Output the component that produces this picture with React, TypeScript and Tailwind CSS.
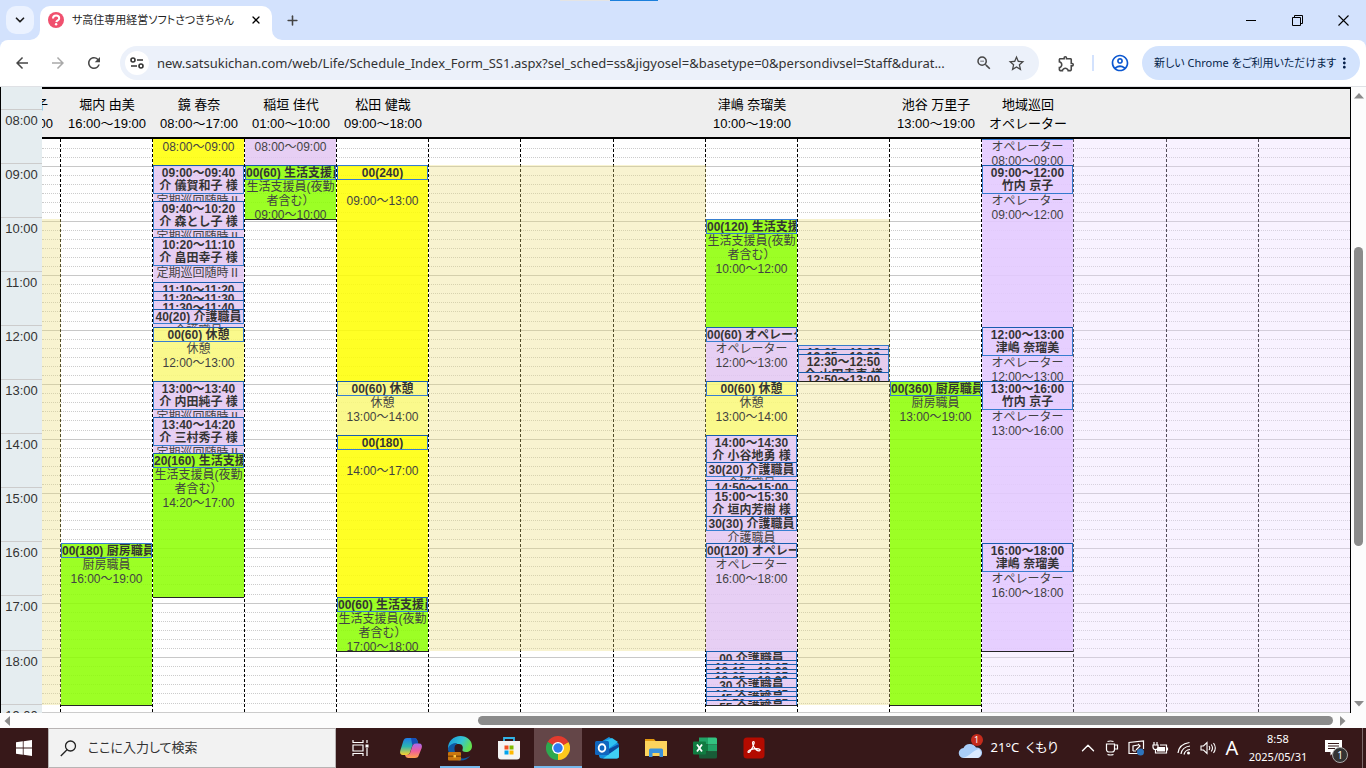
import React from "react";
import {
  MdArrowBack,
  MdArrowForward,
  MdRefresh,
  MdStarBorder,
  MdZoomOut,
  MdOutlineExtension,
  MdMoreVert,
  MdOutlineAccountCircle,
} from "react-icons/md";
import { ChevronDown, ChevronUp, Plus, X } from "lucide-react";

type Tone = "purple" | "violet" | "green" | "yellow" | "cream";

type Shift = {
  from: string;
  to: string;
  tone: Tone;
  title: string;
  person?: string;
  body?: string[];
};

type Shade = { kind: "beige" | "lavender"; from?: string; to?: string };

type Column = { name?: string; hours?: string; shade?: Shade; shifts?: Shift[] };

const TONES: Record<Tone, string> = {
  purple: "bg-[#e3c7f3]",
  violet: "bg-[#e3c9ff]",
  green: "bg-[#8bff00]",
  yellow: "bg-[#ffff00]",
  cream: "bg-[#faf978]",
};

const LIFE = ["生活支援員(夜勤", "者含む）"];
const ROUND = ["定期巡回随時Ⅱ"];

const span = (from: string, to: string) => `${from}〜${to}`;

const visit = (from: string, to: string, person?: string): Shift => ({
  from,
  to,
  tone: "purple",
  title: span(from, to),
  person,
  body: person ? ROUND : [],
});

const duty = (from: string, to: string, tone: Tone, title: string, body: string[]): Shift => ({
  from,
  to,
  tone,
  title,
  body: body.length ? [...body, span(from, to)] : [],
});

const care = (from: string, to: string, title: string): Shift => ({
  from,
  to,
  tone: "purple",
  title,
  body: ["介護職員"],
});

const operator = (from: string, to: string, person: string): Shift => ({
  from,
  to,
  tone: "violet",
  title: span(from, to),
  person,
  body: ["オペレーター", span(from, to)],
});

const BEIGE_DAY: Shade = { kind: "beige", from: "09:00", to: "18:00" };
const BEIGE_LATE: Shade = { kind: "beige", from: "10:00", to: "19:00" };
const LAVENDER: Shade = { kind: "lavender" };

const COLUMNS: Column[] = [
  {
    name: "堀内 由美",
    hours: "16:00〜19:00",
    shifts: [duty("16:00", "19:00", "green", "00(180) 厨房職員", ["厨房職員"])],
  },
  {
    name: "鏡 春奈",
    hours: "08:00〜17:00",
    shifts: [
      duty("08:00", "09:00", "yellow", "00(60)", [""]),
      visit("09:00", "09:40", "介 儀賀和子 様"),
      visit("09:40", "10:20", "介 森とし子 様"),
      visit("10:20", "11:10", "介 畠田幸子 様"),
      visit("11:10", "11:20"),
      visit("11:20", "11:30"),
      visit("11:30", "11:40"),
      care("11:40", "12:00", "40(20) 介護職員"),
      duty("12:00", "13:00", "cream", "00(60) 休憩", ["休憩"]),
      visit("13:00", "13:40", "介 内田純子 様"),
      visit("13:40", "14:20", "介 三村秀子 様"),
      duty("14:20", "17:00", "green", "20(160) 生活支援員", LIFE),
    ],
  },
  {
    name: "稲垣 佳代",
    hours: "01:00〜10:00",
    shifts: [
      duty("08:00", "09:00", "purple", "00(60)", [""]),
      duty("09:00", "10:00", "green", "00(60) 生活支援員", LIFE),
    ],
  },
  {
    name: "松田 健哉",
    hours: "09:00〜18:00",
    shifts: [
      duty("09:00", "13:00", "yellow", "00(240)", [""]),
      duty("13:00", "14:00", "cream", "00(60) 休憩", ["休憩"]),
      duty("14:00", "17:00", "yellow", "00(180)", [""]),
      duty("17:00", "18:00", "green", "00(60) 生活支援員", LIFE),
    ],
  },
  { shade: BEIGE_DAY },
  { shade: BEIGE_DAY },
  { shade: BEIGE_DAY },
  {
    name: "津嶋 奈瑠美",
    hours: "10:00〜19:00",
    shifts: [
      duty("10:00", "12:00", "green", "00(120) 生活支援員", LIFE),
      duty("12:00", "13:00", "purple", "00(60) オペレーター", ["オペレーター"]),
      duty("13:00", "14:00", "cream", "00(60) 休憩", ["休憩"]),
      visit("14:00", "14:30", "介 小谷地勇 様"),
      care("14:30", "14:50", "30(20) 介護職員"),
      visit("14:50", "15:00"),
      visit("15:00", "15:30", "介 垣内芳樹 様"),
      care("15:30", "16:00", "30(30) 介護職員"),
      duty("16:00", "18:00", "purple", "00(120) オペレーター", ["オペレーター"]),
      duty("18:00", "18:10", "purple", "00 介護職員", []),
      visit("18:10", "18:15"),
      visit("18:15", "18:20"),
      visit("18:20", "18:25"),
      visit("18:25", "18:30"),
      duty("18:30", "18:40", "purple", "30 介護職員", []),
      visit("18:40", "18:45"),
      duty("18:45", "18:50", "purple", "45 介護職員", []),
      visit("18:50", "18:55"),
      duty("18:55", "19:00", "purple", "55 介護職員", []),
    ],
  },
  {
    shade: BEIGE_LATE,
    shifts: [
      visit("12:20", "12:25"),
      visit("12:25", "12:30"),
      visit("12:30", "12:50", "介 山田幸恵 様"),
      visit("12:50", "13:00"),
    ],
  },
  {
    name: "池谷 万里子",
    hours: "13:00〜19:00",
    shifts: [duty("13:00", "19:00", "green", "00(360) 厨房職員", ["厨房職員"])],
  },
  {
    name: "地域巡回",
    hours: "オペレーター",
    shade: LAVENDER,
    shifts: [
      operator("08:00", "09:00", "竹内 京子"),
      operator("09:00", "12:00", "竹内 京子"),
      operator("12:00", "13:00", "津嶋 奈瑠美"),
      operator("13:00", "16:00", "竹内 京子"),
      operator("16:00", "18:00", "津嶋 奈瑠美"),
    ],
  },
  { shade: LAVENDER },
  { shade: LAVENDER },
  { shade: LAVENDER },
];

const GRID =
  "grid grid-cols-[19px_92fr_92fr_92fr_92fr_92fr_93fr_92fr_92fr_92fr_92fr_92fr_93fr_92fr_91fr]";

/* 9:00 sits 26px below the header; one hour is 54px tall. */
const yOf = (time: string) => {
  const [h, m] = time.split(":").map(Number);
  return 26 + Math.floor(((h - 9) * 60 + m) * 0.9);
};

const HOURS = ["08", "09", "10", "11", "12", "13", "14", "15", "16", "17", "18", "19"];
const LONG_HOURS = [true, false, true, false, true, false, true, true, false, true];
const SLOTS: { tall: boolean; hour: boolean }[] = [
  { tall: true, hour: false },
  { tall: false, hour: false },
  { tall: false, hour: true },
  ...LONG_HOURS.flatMap((long) =>
    [0, 1, 2, 3, 4, 5].map((i) => ({ tall: long && i === 4, hour: i === 5 })),
  ),
];

function ShiftBlock({ shift, offset }: { shift: Shift; offset: number }) {
  const height = yOf(shift.to) - yOf(shift.from) + 1;
  return (
    <article
      className={`-mb-px shrink-0 overflow-hidden border-b border-black text-center text-[12px] opacity-85 ${TONES[shift.tone]}`}
      style={{ height, marginTop: offset }}
    >
      <h3
        className={`overflow-hidden border border-[#1668c8] pt-px leading-[13px] font-bold whitespace-nowrap text-[#111] ${shift.person ? "h-[29px]" : "h-[15px]"}`}
      >
        <span className="block">{shift.title}</span>
        {shift.person && <span className="block">{shift.person}</span>}
      </h3>
      {shift.body?.map((line, i) => (
        <p
          key={i}
          className={`whitespace-nowrap text-[#222] ${line.includes(":") ? "h-[13px] leading-[15px]" : "h-[14px] leading-[14px]"}`}
        >
          {line}
        </p>
      ))}
    </article>
  );
}

function ShadeCell({ shade }: { shade?: Shade }) {
  if (!shade) return <div />;
  if (shade.kind === "lavender") return <div className="bg-[#ebdaff]/35" />;
  const top = yOf(shade.from!);
  return (
    <div>
      <div className="bg-[#ebdd79]/35" style={{ marginTop: top, height: yOf(shade.to!) - top }} />
    </div>
  );
}

function ShiftColumn({ shifts = [] }: { shifts?: Shift[] }) {
  return (
    <div className="flex min-w-0 flex-col pr-px">
      {shifts.map((s, i) => (
        <ShiftBlock
          key={s.from}
          shift={s}
          offset={yOf(s.from) - (i === 0 ? 0 : yOf(shifts[i - 1].to))}
        />
      ))}
    </div>
  );
}

function Schedule() {
  return (
    <div className="flex min-h-0 min-w-0 flex-1 overflow-hidden border-x border-black bg-white">
      <div className="w-[41px] shrink-0 overflow-hidden bg-[#e5edf0] text-center text-[13px] text-[#333]">
        <div className="h-[23px] border-b border-[#ccc]" />
        {HOURS.map((h) => (
          <div
            key={h}
            className={`border-b border-[#ccc] leading-[22px] ${h === "17" ? "h-[55px]" : "h-[54px]"}`}
          >
            {h}:00
          </div>
        ))}
      </div>
      <div className="flex min-w-0 flex-1 flex-col">
        <div
          className={`${GRID} h-[52px] shrink-0 border-y-2 border-black bg-[#eee] pt-1.5 text-center text-[13px] leading-[19px] whitespace-nowrap text-black`}
        >
          <div className="overflow-hidden text-right">
            <p className="pr-[13px]">
              <span className="float-right">子</span>
            </p>
            <p className="clear-both pr-2">
              <span className="float-right">00</span>
            </p>
          </div>
          {COLUMNS.map((c, i) => (
            <div key={i}>
              <p>{c.name}</p>
              <p>{c.hours}</p>
            </div>
          ))}
        </div>
        <div className="grid min-h-0 flex-1 grid-cols-1 grid-rows-1 overflow-hidden border-b border-[#ccc]">
          <div className="col-start-1 row-start-1 h-0">
            {SLOTS.map((s, i) => (
              <div
                key={i}
                className={`border-b ${s.tall ? "h-[10px]" : "h-[9px]"} ${s.hour ? "border-solid border-[#c8c8c8]" : "border-dotted border-[#ccc]"}`}
              />
            ))}
          </div>
          <div className={`${GRID} col-start-1 row-start-1`}>
            <div className="border-r border-dashed border-black" />
            {COLUMNS.map((_, i) => (
              <div
                key={i}
                className={i === COLUMNS.length - 1 ? "" : "border-r border-dashed border-black"}
              />
            ))}
          </div>
          <div className={`${GRID} col-start-1 row-start-1`}>
            <ShadeCell shade={BEIGE_LATE} />
            {COLUMNS.map((c, i) => (
              <ShadeCell key={i} shade={c.shade} />
            ))}
          </div>
          <div className={`${GRID} col-start-1 row-start-1 h-0`}>
            <div />
            {COLUMNS.map((c, i) => (
              <ShiftColumn key={i} shifts={c.shifts} />
            ))}
          </div>
        </div>
      </div>
    </div>
  );
}

function TabStrip() {
  return (
    <header className="relative flex h-10 shrink-0 items-start bg-[#d3e2fd] pt-1.5 pl-1.5">
      <div className="absolute top-0 left-[41%] flex h-px w-[98px]">
        <span className="flex-1 bg-[#e4e4e4]" />
        <span className="w-12 bg-[#1a7fdc]" />
      </div>
      <button
        aria-label="タブを検索"
        className="flex size-7 items-center justify-center rounded-[10px] bg-[#ebf2ff] text-[#1f1f1f]"
      >
        <ChevronDown size={14} strokeWidth={3} />
      </button>
      <div className="flex h-[34px] items-end">
        <svg width="10" height="10" aria-hidden="true" className="-ml-1">
          <path d="M10 0v10H0A10 10 0 0 0 10 0z" fill="#fff" />
        </svg>
        <div className="flex h-[34px] w-[232px] items-center rounded-t-[10px] bg-white px-2 pb-1.5">
          <svg width="16" height="16" viewBox="0 0 16 16" aria-hidden="true">
            <circle cx="8" cy="8" r="8" fill="#f0506e" />
            <path
              d="M5 6.4C5 4.6 6.300 3.500 8.100 3.500s3.100 1.100 3.100 2.700c0 2.300-2.700 2-2.900 4"
              fill="none"
              stroke="#fff"
              strokeWidth="2"
            />
            <circle cx="8.100" cy="12.300" r="1.200" fill="#fff" />
          </svg>
          <span className="ml-2 flex-1 text-[11px] whitespace-nowrap text-[#1f1f1f] [font-feature-settings:'palt']">
            サ高住専用経営ソフトさつきちゃん
          </span>
          <button aria-label="タブを閉じる" className="flex size-4 items-center justify-center">
            <X size={12} strokeWidth={2.500} />
          </button>
        </div>
        <svg width="10" height="10" aria-hidden="true">
          <path d="M0 0v10h10A10 10 0 0 1 0 0z" fill="#fff" />
        </svg>
      </div>
      <button
        aria-label="新しいタブ"
        className="flex h-7 w-5 items-center justify-center text-[#444]"
      >
        <Plus size={15} strokeWidth={2.500} />
      </button>
      <div className="ml-auto flex text-black">
        <button aria-label="最小化" className="flex h-7 w-[46px] items-center justify-center">
          <svg width="10" height="10">
            <path d="M0 5.500h10" stroke="currentColor" />
          </svg>
        </button>
        <button aria-label="元に戻す" className="flex h-7 w-[46px] items-center justify-center">
          <svg width="11" height="11" fill="none" stroke="currentColor">
            <path d="M.5 2.500h8v8h-8zM2.500 2.500v-2h8v8h-2" />
          </svg>
        </button>
        <button aria-label="閉じる" className="flex h-7 w-[46px] items-center justify-center">
          <svg width="11" height="11" stroke="currentColor" strokeWidth="1.100">
            <path d="M.5.5l10 10M10.500.5l-10 10" />
          </svg>
        </button>
      </div>
    </header>
  );
}

function Toolbar() {
  const btn = "flex size-7 shrink-0 items-center justify-center";
  return (
    <div className="shrink-0 bg-[#d3e2fd]">
      <div className="flex h-[47px] items-start rounded-t-[8px] border-b border-[#dfe1e5] bg-white pt-1.5 pr-1.5 pl-2 text-[#474747]">
        <nav className="flex h-[34px] items-center gap-2">
          <button aria-label="戻る" className={btn}>
            <MdArrowBack size={18} />
          </button>
          <button aria-label="進む" className={`${btn} text-[#a9a9a9]`}>
            <MdArrowForward size={18} />
          </button>
          <button aria-label="再読み込み" className={btn}>
            <MdRefresh size={18} />
          </button>
        </nav>
        <div className="ml-3 flex h-[34px] min-w-0 flex-1 items-center rounded-full bg-[#ecf1fa] pr-[7px] pl-[5px]">
          <button
            aria-label="サイト情報"
            className="flex size-6 shrink-0 items-center justify-center rounded-full bg-white text-[#333]"
          >
            <svg width="14" height="12" fill="none" stroke="currentColor" strokeWidth="1.600">
              <circle cx="3" cy="3" r="2" />
              <path d="M7 3h6M1 9h6" />
              <circle cx="11" cy="9" r="2" />
            </svg>
          </button>
          <input
            aria-label="アドレス"
            readOnly
            className="ml-2 h-6 min-w-0 flex-1 truncate bg-transparent text-[13px] text-[#333] outline-none"
            value="new.satsukichan.com/web/Life/Schedule_Index_Form_SS1.aspx?sel_sched=ss&jigyosel=&basetype=0&persondivsel=Staff&durat..."
          />
          <button aria-label="ズーム" className="flex w-8 shrink-0 justify-center">
            <MdZoomOut size={18} />
          </button>
          <button aria-label="ブックマーク" className="flex w-8 shrink-0 justify-center">
            <MdStarBorder size={19} />
          </button>
        </div>
        <div className="ml-[13px] flex h-[34px] items-center">
          <button aria-label="拡張機能" className={btn}>
            <MdOutlineExtension size={19} />
          </button>
          <span className="mx-3 h-4 w-0.5 bg-[#d3e2fd]" />
          <button aria-label="プロフィール" className={`${btn} text-[#0b57d0]`}>
            <MdOutlineAccountCircle size={20} />
          </button>
          <button className="ml-2 flex h-[34px] w-[218px] items-center justify-between rounded-full bg-[#d3e3fd] pr-[7px] pl-3 text-[11px] whitespace-nowrap text-[#041e49] [font-feature-settings:'palt']">
            新しい Chrome をご利用いただけます
            <MdMoreVert size={18} />
          </button>
        </div>
      </div>
    </div>
  );
}

function VerticalScroll() {
  return (
    <div className="flex w-[15px] shrink-0 flex-col items-center bg-[#fcfcfc] py-1.5 text-[#8b8b8b]">
      <svg width="10" height="6" fill="currentColor">
        <path d="M5 0l5 5.500H0z" />
      </svg>
      <div className="flex w-[9px] flex-1 flex-col py-1.5">
        <div className="flex-[142]" />
        <div className="flex-[298] rounded-full bg-[#8b8b8b]" />
        <div className="flex-[149]" />
      </div>
      <svg width="10" height="6" fill="currentColor">
        <path d="M0 0h10L5 5.500z" />
      </svg>
    </div>
  );
}

function HorizontalScroll() {
  return (
    <div className="flex h-[15px] shrink-0 items-center bg-[#fcfcfc] pr-5 pl-1 text-[#8b8b8b]">
      <svg width="6" height="10" fill="currentColor">
        <path d="M6 0v10L.5 5z" />
      </svg>
      <div className="flex h-[9px] flex-1 px-[7px]">
        <div className="flex-[461]" />
        <div className="flex-[855] rounded-full bg-[#8b8b8b]" />
      </div>
      <svg width="6" height="10" fill="currentColor">
        <path d="M0 0v10l5.500-5z" />
      </svg>
    </div>
  );
}

function CopilotIcon() {
  return (
    <svg width="24" height="22" viewBox="0 0 24 22">
      <defs>
        <linearGradient id="cpA" x1="0" y1="0" x2="0" y2="1">
          <stop offset="0" stopColor="#1f7be8" />
          <stop offset=".5" stopColor="#2bb5b0" />
          <stop offset="1" stopColor="#ffd02b" />
        </linearGradient>
        <linearGradient id="cpB" x1="0" y1="0" x2="0" y2="1">
          <stop offset="0" stopColor="#a56bf0" />
          <stop offset=".5" stopColor="#ee5c9c" />
          <stop offset="1" stopColor="#ffa04c" />
        </linearGradient>
      </defs>
      <path d="M8 1h7c2 0 3 1 3.500 3l.8 2.500h-3c-2 0-2.800 1-3.300 3l-2 6c-.6 1.700-1.500 2.500-3 2.500H4C1.500 18 .5 16 1.300 13.500l3-9.500C5 2 6 1 8 1z" fill="url(#cpA)" />
      <path d="M12 1h3c2 0 3 1 3.500 3l.8 2.500h-3c-1.500 0-2.500.6-3 1.800z" fill="#154fb8" />
      <path d="M16 21H9.500c-2 0-3-1-3.500-3h2c1.800 0 2.800-1 3.300-2.800l2-6C14 7.300 15 6.500 17 6.500h3c2.500 0 3.500 2 2.700 4.500l-3 7.500C19 20.300 18 21 16 21z" fill="url(#cpB)" />
    </svg>
  );
}

function EdgeIcon() {
  return (
    <svg width="26" height="26" viewBox="0 0 26 26">
      <defs>
        <linearGradient id="edA" x1="0" y1="0" x2="1" y2=".4">
          <stop offset="0" stopColor="#1695dc" />
          <stop offset=".6" stopColor="#35c4d4" />
          <stop offset="1" stopColor="#62e052" />
        </linearGradient>
      </defs>
      <path d="M1 13C1 6 6.500 1 13.500 1 20 1 25 5.500 25 11c0 4-2.800 6-6 6-3 0-4-1.300-3.500-2.500.9-2 .2-5.500-3.500-5.500C7 9 3 11 1 16z" fill="url(#edA)" />
      <path d="M1 13c2-4 6-5.500 9.500-5C7.500 9.500 7 13 8 17c1.200 5 6 8 12 5.500 1.500-.6 3-1.500 3.500-2C21.500 23.500 18 25.500 13.500 25.500 6.500 25.500 1 20 1 13z" fill="#0f59a4" />
      <rect x="1" y="17" width="13" height="8.500" rx="1" fill="#c9760e" />
      <path d="M1 20.500h13V22H1z" fill="#8a4a05" />
      <rect x="6.500" y="20" width="2.500" height="2.500" fill="#ffc83d" />
    </svg>
  );
}

function StoreIcon() {
  return (
    <svg width="24" height="24" viewBox="0 0 24 24">
      <path d="M7 6V2h10v4" fill="none" stroke="#31b4e8" strokeWidth="1.800" />
      <path d="M1 5h22v15.500a3 3 0 0 1-3 3H4a3 3 0 0 1-3-3z" fill="#f4f4f4" />
      <path d="M7.500 9.500h4v4h-4z" fill="#f25022" />
      <path d="M12.500 9.500h4v4h-4z" fill="#7fba00" />
      <path d="M7.500 14.500h4v4h-4z" fill="#00a4ef" />
      <path d="M12.500 14.500h4v4h-4z" fill="#ffb900" />
    </svg>
  );
}

function ChromeIcon() {
  return (
    <svg width="24" height="24" viewBox="0 0 24 24">
      <path d="M12 12L1.600 6A12 12 0 0 1 22.400 6z" fill="#e33b2e" />
      <path d="M12 12L12 24A12 12 0 0 1 1.600 6z" fill="#2da94f" />
      <path d="M12 12L22.400 6A12 12 0 0 1 12 24z" fill="#fdc91c" />
      <path d="M12 6h10.400L12 12z" fill="#e33b2e" />
      <path d="M6.800 15L1.600 6 12 12z" fill="#2da94f" />
      <path d="M17.200 15L12 24V12z" fill="#fdc91c" />
      <circle cx="12" cy="12" r="6" fill="#fff" />
      <circle cx="12" cy="12" r="4.700" fill="#2f7bef" />
    </svg>
  );
}

function OutlookIcon() {
  return (
    <svg width="26" height="24" viewBox="0 0 26 24">
      <path d="M5 7L15 1l10 7v12a2.500 2.500 0 0 1-2.500 2.500H8A3 3 0 0 1 5 20z" fill="#1490df" />
      <path d="M11 5l7-3 6 4-10 7z" fill="#2fc3f2" />
      <path d="M25 8v4L13 19l-2-4z" fill="#0a4a9e" />
      <path d="M25 11v9a2.500 2.500 0 0 1-2.500 2.500H9z" fill="#3fd0f5" />
      <rect x="1" y="5" width="14" height="14" rx="1.500" fill="#1066be" />
      <ellipse cx="8" cy="12" rx="3.300" ry="3.700" fill="none" stroke="#fff" strokeWidth="1.900" />
    </svg>
  );
}

function FolderIcon() {
  return (
    <svg width="24" height="20" viewBox="0 0 24 20">
      <path d="M1 1h9l2 2.500H1z" fill="#e2990f" />
      <path d="M1 3h22v15H1z" fill="#fcd35d" />
      <path d="M5 19v-7a1.500 1.500 0 0 1 1.500-1.500h11A1.500 1.500 0 0 1 19 12v7h-3.500v-4h-7v4z" fill="#3a92dc" />
    </svg>
  );
}

function ExcelIcon() {
  return (
    <svg width="26" height="24" viewBox="0 0 26 24">
      <path d="M7 1.500h9v7H7z" fill="#21a366" />
      <path d="M16 1.500h7.500A1.500 1.500 0 0 1 25 3v5.500h-9z" fill="#33c481" />
      <path d="M7 8.500h9v7H7z" fill="#107c41" />
      <path d="M16 8.500h9v7h-9z" fill="#21a366" />
      <path d="M7 15.500h18V21a1.500 1.500 0 0 1-1.500 1.500h-15A1.500 1.500 0 0 1 7 21z" fill="#185c37" />
      <rect x="1" y="5.500" width="13" height="13" rx="1" fill="#107c41" />
      <path d="M5 8.500l5 7M10 8.500l-5 7" stroke="#fff" strokeWidth="1.800" />
    </svg>
  );
}

function AcrobatIcon() {
  return (
    <svg width="22" height="22" viewBox="0 0 22 22">
      <rect x=".5" y=".5" width="21" height="21" rx="3.500" fill="#b30b00" />
      <path
        d="M10.500 4.500c-1.500 0-1 3 .5 5.500 1.500 2.600 4 4.200 5.500 3.800 1.600-.6.400-2.300-3-2.200-3 .1-6.700 1-8 2.300-1.300 1.400.1 2.600 1.800.2 1.400-2 3.200-5.300 3.800-7.700.3-1.300 0-1.900-.6-1.900z"
        fill="none"
        stroke="#fff"
        strokeWidth="1.200"
      />
    </svg>
  );
}

const APPS = [
  { name: "Copilot", icon: <CopilotIcon />, state: "" },
  { name: "Edge", icon: <EdgeIcon />, state: "open" },
  { name: "Microsoft Store", icon: <StoreIcon />, state: "" },
  { name: "Chrome", icon: <ChromeIcon />, state: "active" },
  { name: "Outlook", icon: <OutlookIcon />, state: "" },
  { name: "エクスプローラー", icon: <FolderIcon />, state: "" },
  { name: "Excel", icon: <ExcelIcon />, state: "" },
  { name: "Acrobat", icon: <AcrobatIcon />, state: "" },
];

function Taskbar() {
  const tray = "flex h-10 w-6 items-center justify-center";
  return (
    <footer className="flex h-10 shrink-0 bg-[#371819] text-white">
      <button aria-label="スタート" className="flex w-12 items-center justify-center">
        <svg width="16" height="16" fill="#fff">
          <path d="M0 2.300L6.800 1.300v6.300H0zM7.600 1.200L16 0v7.600H7.600zM0 8.400h6.800v6.300L0 13.700zM7.600 8.400H16V16l-8.400-1.200z" />
        </svg>
      </button>
      <label className="flex w-[288px] items-center border border-[#b8b4b4] bg-[#f2f2f2] pl-[11px] text-black">
        <svg width="17" height="17" fill="none" stroke="#222" strokeWidth="1.300" className="shrink-0">
          <circle cx="10.500" cy="6" r="5" />
          <path d="M7 9.700L.8 16" />
        </svg>
        <input
          aria-label="検索"
          placeholder="ここに入力して検索"
          className="ml-[11px] w-full min-w-0 bg-transparent text-[13px] outline-none [font-feature-settings:'palt'] placeholder:text-[#333]"
        />
      </label>
      <button aria-label="タスクビュー" className="flex w-12 items-center justify-center">
        <svg width="17" height="16" fill="none" stroke="#fff" strokeWidth="1.200">
          <path d="M1 0v2.500h10V0M1 16v-2.500h10V16M1 5h10v6H1zM15 0v3M15 8v8" />
          <path d="M13.500 4.500h3v3h-3z" fill="#fff" stroke="none" />
        </svg>
      </button>
      <nav className="ml-[3px] flex gap-px">
        {APPS.map((a) => (
          <button
            key={a.name}
            aria-label={a.name}
            className={`flex w-12 flex-col items-center ${a.state === "active" ? "bg-[#644648]" : ""}`}
          >
            <span className="flex h-[38px] items-center pt-0.5">{a.icon}</span>
            {a.state === "open" && <span className="h-0.5 w-10 bg-[#76b9ed]" />}
            {a.state === "active" && <span className="h-0.5 w-12 bg-[#76b9ed]" />}
          </button>
        ))}
      </nav>
      <div className="ml-auto flex items-center">
        <button className="flex items-center gap-2 text-[13px] whitespace-nowrap [font-feature-settings:'palt']">
          <span className="relative">
            <svg width="25" height="16" viewBox="0 0 25 16" className="mt-1">
              <path d="M6 16a5 5 0 0 1-.5-10A7 7 0 0 1 18 5.500 5.300 5.300 0 0 1 19.500 16z" fill="#a9cdf8" />
              <path d="M5 16c6-1 10-8 16-9a5.300 5.300 0 0 1-1.500 9z" fill="#dceaff" />
            </svg>
            <span className="absolute -top-1 right-0 flex size-3 items-center justify-center rounded-full bg-[#c42b1c] text-[9px]">
              1
            </span>
          </span>
          <span>21°C&nbsp; くもり</span>
        </button>
        <div className="ml-[18px] flex">
          <button aria-label="隠れているインジケーター" className={tray}>
            <ChevronUp size={22} strokeWidth={1.500} />
          </button>
          <span className={tray}>
            <svg width="14" height="16" fill="none" stroke="#fff" strokeWidth="1.200">
              <path d="M1.500 4h8v5.500a2.500 2.500 0 0 1-2.500 2.500H4A2.500 2.500 0 0 1 1.500 9.500zM9.500 5h3v4h-3M2.500 1.500q3-1 6 0M2.500 14.500q3 1 6 0" />
            </svg>
          </span>
          <span className={tray}>
            <svg width="17" height="16" fill="none" stroke="#fff" strokeWidth="1.200">
              <path d="M10 13.500H1v-11L15.500 1v8M1 2.500v11M5 11V6l5-1M5 11h3M10 4l2 2-4 4" />
              <circle cx="12.500" cy="12" r="3.500" fill="#2e74bc" stroke="none" />
            </svg>
          </span>
          <span className={tray}>
            <svg width="17" height="13" fill="none" stroke="#fff" strokeWidth="1.200">
              <path d="M2 0v3M5 0v3M1 3h5v2a2.500 2.500 0 0 1-5 0zM3.500 7.500V11h11V3H8M15.500 5.500v3" />
              <path d="M6 5h7v4.500H5V7z" fill="#fff" stroke="none" />
            </svg>
          </span>
          <span className={tray}>
            <svg width="14" height="14" fill="none" stroke="#fff" strokeWidth="1.200">
              <path d="M1 12Q2 3 12.500 1.500M4 13Q5 6 13 5M7 13.500Q8 9 13 8.500" />
              <circle cx="11.500" cy="12" r="1.500" fill="#fff" stroke="none" />
            </svg>
          </span>
          <span className={tray}>
            <svg width="17" height="14" fill="none" stroke="#fff" strokeWidth="1.100">
              <path d="M1 5h2.500L7 1.500v11L3.500 9H1zM9 5q1.500 2 0 4M11.200 3.500q2.600 3.500 0 7M13.500 2q3.600 5 0 10" />
            </svg>
          </span>
          <span className={`${tray} text-[20px]`}>A</span>
        </div>
        <div className="w-[68px] text-center text-[11px] leading-[18px] whitespace-nowrap">
          <p>8:58</p>
          <p>2025/05/31</p>
        </div>
        <button aria-label="通知" className="relative ml-[13px] flex w-[37px]">
          <svg width="17" height="16">
            <path d="M0 0h17v12H9l-3.500 3.500V12H0z" fill="#fff" />
            <path d="M3 3.500h11M3 6h11M3 8.500h7" stroke="#371819" />
          </svg>
          <span className="absolute top-[7px] left-[7px] flex size-4 items-center justify-center rounded-full border border-[#aaa] bg-[#333] text-[10px]">
            1
          </span>
        </button>
        <span className="mr-[3px] h-10 w-px bg-[#7d6a6b]" />
      </div>
    </footer>
  );
}

export default function App() {
  return (
    <div className="flex h-screen flex-col overflow-hidden bg-white font-['Noto_Sans','Noto_Sans_CJK_JP',sans-serif]">
      <TabStrip />
      <Toolbar />
      <main className="flex min-h-0 flex-1 font-['Liberation_Sans','Noto_Sans_CJK_JP',sans-serif]">
        <Schedule />
        <VerticalScroll />
      </main>
      <HorizontalScroll />
      <Taskbar />
    </div>
  );
}
